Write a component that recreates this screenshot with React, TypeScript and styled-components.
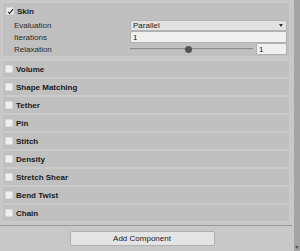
import React from 'react'
import styled, { createGlobalStyle } from 'styled-components'

const GlobalStyle = createGlobalStyle`
  html, body {
    margin: 0;
    padding: 0;
    background: #c8c8c8;
  }
  body {
    font-family: "Liberation Sans", Arial, sans-serif;
    font-size: 8px;
    color: #1a1a1a;
  }
`

const Window = styled.div`
  width: 300px;
  height: 251px;
  display: flex;
  overflow: hidden;
  background: #c8c8c8;
`

const Content = styled.div`
  flex: 1;
  display: flex;
  flex-direction: column;
  padding: 2px 2px 0 2px;
`

const Scrollbar = styled.div`
  width: 6px;
  margin-left: 2px;
  background: #a4a4a4;
  display: flex;
  flex-direction: column;
  justify-content: flex-end;
  align-items: center;
  padding-bottom: 2px;
`

const ArrowDown = styled.div`
  width: 0;
  height: 0;
  border-left: 2px solid transparent;
  border-right: 2px solid transparent;
  border-top: 3px solid #555;
`

const Section = styled.div`
  box-sizing: border-box;
  background: #c0c0c0;
  border: 1px solid #cbcbcb;
  border-radius: 2px;
  padding-bottom: 1px;
`

const Header = styled.div`
  box-sizing: border-box;
  height: 16px;
  display: flex;
  align-items: center;
  padding-left: 3px;
  gap: 3px;
  font-weight: bold;
`

const Row = styled(Section)`
  height: 18px;
  display: flex;
  align-items: center;
  padding: 0 0 0 2px;
  gap: 3px;
  font-weight: bold;
`

const Check = styled.div`
  box-sizing: border-box;
  width: 8px;
  height: 8px;
  background: #efefef;
  border: 1px solid #d8d8d8;
  border-radius: 1px;
  display: flex;
  align-items: center;
  justify-content: center;
`

const CheckMark = styled.svg`
  width: 7px;
  height: 7px;
  overflow: visible;
`

const PropRow = styled.div`
  height: 12px;
  display: flex;
  align-items: center;
  padding-left: 11px;
  padding-right: 2px;
`

const PropLabel = styled.div`
  width: 116px;
  color: #2a2a2a;
`

const Dropdown = styled.div`
  box-sizing: border-box;
  flex: 1;
  height: 11px;
  background: #e2e2e2;
  border: 1px solid #b4b4b4;
  border-radius: 2px;
  display: flex;
  align-items: center;
  justify-content: space-between;
  padding: 0 3px 0 2px;
`

const Caret = styled.div`
  width: 0;
  height: 0;
  border-left: 2.5px solid transparent;
  border-right: 2.5px solid transparent;
  border-top: 3px solid #333;
`

const Field = styled.div<{ $w?: number }>`
  box-sizing: border-box;
  ${p => (p.$w ? `width: ${p.$w}px;` : 'flex: 1;')}
  height: 12px;
  background: #f0f0f0;
  border: 1px solid #b0b0b0;
  border-radius: 2px;
  display: flex;
  align-items: center;
  padding-left: 2px;
`

const Slider = styled.div`
  position: relative;
  flex: 1;
  height: 12px;
  margin-right: 3px;
  display: flex;
  align-items: center;
`

const Track = styled.div`
  width: 100%;
  height: 1px;
  background: #8a8a8a;
  border-bottom: 1px solid #b8b8b8;
`

const Knob = styled.div`
  position: absolute;
  top: 3px;
  width: 7px;
  height: 7px;
  border-radius: 50%;
  background: #555;
`

const Rows = styled.div`
  display: flex;
  flex-direction: column;
  margin-top: 3px;
`

const Divider = styled.div`
  height: 1px;
  background: #999;
  margin: 3px -2px 0 -2px;
`

const Footer = styled.div`
  display: flex;
  justify-content: center;
  padding-top: 5px;
  padding-right: 8px;
`

const Button = styled.div`
  box-sizing: border-box;
  width: 145px;
  height: 15px;
  background: #e4e4e4;
  border: 1px solid #b0b0b0;
  border-radius: 2px;
  display: flex;
  align-items: center;
  justify-content: center;
`

const modules = [
  'Volume',
  'Shape Matching',
  'Tether',
  'Pin',
  'Stitch',
  'Density',
  'Stretch Shear',
  'Bend Twist',
  'Chain',
]

export default function App() {
  const relaxation = 0.47
  return (
    <>
      <GlobalStyle />
      <Window>
        <Content>
          <Section>
            <Header>
              <Check>
                <CheckMark viewBox="0 0 7 7">
                  <path d="M1 3.8 L2.7 5.5 L6 1.2" fill="none" stroke="#222" strokeWidth="1.1" />
                </CheckMark>
              </Check>
              Skin
            </Header>
            <PropRow>
              <PropLabel>Evaluation</PropLabel>
              <Dropdown>
                Parallel
                <Caret />
              </Dropdown>
            </PropRow>
            <PropRow>
              <PropLabel>Iterations</PropLabel>
              <Field>1</Field>
            </PropRow>
            <PropRow>
              <PropLabel>Relaxation</PropLabel>
              <Slider>
                <Track />
                <Knob style={{ left: `calc(${relaxation * 100}% - 3px)` }} />
              </Slider>
              <Field $w={31}>1</Field>
            </PropRow>
          </Section>
          <Rows>
            {modules.map(m => (
              <Row key={m}>
                <Check />
                {m}
              </Row>
            ))}
          </Rows>
          <Divider />
          <Footer>
            <Button>Add Component</Button>
          </Footer>
        </Content>
        <Scrollbar>
          <ArrowDown />
        </Scrollbar>
      </Window>
    </>
  )
}
